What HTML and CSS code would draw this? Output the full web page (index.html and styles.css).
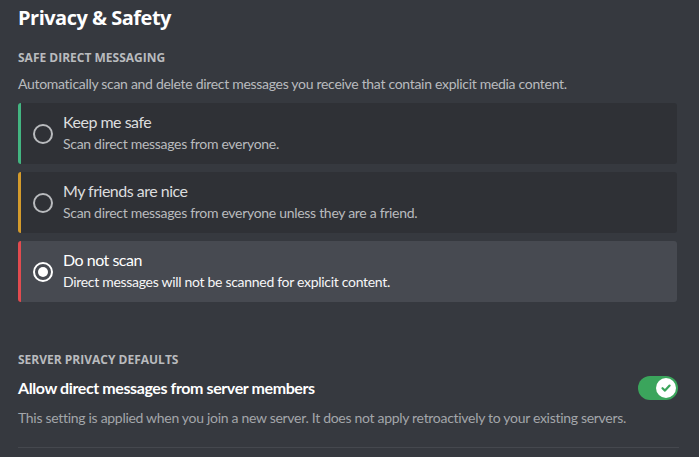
FILE: index.html
```html
<!DOCTYPE html>
<html>
<head>
<meta charset="utf-8">
<link rel="stylesheet" href="styles.css">
</head>
<body>
<main class="page">
  <h1 class="title">Privacy &amp; Safety</h1>
  <h2 class="section-head">Safe Direct Messaging</h2>
  <p class="section-desc">Automatically scan and delete direct messages you receive that contain explicit media content.</p>
  <div class="options">
    <div class="option option-green">
      <span class="radio"></span>
      <div class="option-text">
        <div class="option-title">Keep me safe</div>
        <div class="option-sub">Scan direct messages from everyone.</div>
      </div>
    </div>
    <div class="option option-yellow">
      <span class="radio"></span>
      <div class="option-text">
        <div class="option-title">My friends are nice</div>
        <div class="option-sub">Scan direct messages from everyone unless they are a friend.</div>
      </div>
    </div>
    <div class="option option-red selected">
      <span class="radio checked"></span>
      <div class="option-text">
        <div class="option-title">Do not scan</div>
        <div class="option-sub">Direct messages will not be scanned for explicit content.</div>
      </div>
    </div>
  </div>

  <h2 class="section-head second">Server Privacy Defaults</h2>
  <div class="setting-row">
    <span class="setting-label">Allow direct messages from server members</span>
    <span class="toggle">
      <span class="knob">
        <svg width="14" height="14" viewBox="0 0 14 14"><path d="M3.5 7.2 L6 9.6 L10.6 4.6" fill="none" stroke="#3ba55c" stroke-width="2.2" stroke-linecap="round" stroke-linejoin="round"/></svg>
      </span>
    </span>
  </div>
  <p class="setting-desc">This setting is applied when you join a new server. It does not apply retroactively to your existing servers.</p>
  <div class="divider"></div>
</main>
</body>
</html>
```

FILE: styles.css
```css
html, body {
  margin: 0;
  padding: 0;
  background: #36393f;
  height: 100%;
}
body {
  font-family: Lato, "Open Sans", sans-serif;
  overflow: hidden;
}
.page {
  padding: 6px 22px 0 18px;
}
.title {
  margin: 0;
  font-family: "Open Sans", sans-serif;
  font-size: 20px;
  line-height: 24px;
  font-weight: 700;
  letter-spacing: -0.5px;
  color: #ffffff;
}
.section-head {
  margin: 20px 0 0;
  font-family: "Open Sans", sans-serif;
  font-size: 12px;
  line-height: 16px;
  font-weight: 700;
  text-transform: uppercase;
  color: #b9bbbe;
  letter-spacing: 0;
}
.section-head.second {
  margin-top: 50px;
}
.section-desc {
  margin: 8px 0 0;
  font-size: 14px;
  line-height: 20px;
  letter-spacing: -0.3px;
  color: #b9bbbe;
}
.options {
  margin-top: 9px;
  display: flex;
  flex-direction: column;
  gap: 8px;
}
.option {
  display: flex;
  align-items: center;
  height: 61px;
  box-sizing: border-box;
  background: #2f3136;
  border-left: 3px solid;
  border-radius: 3px;
  padding: 0 10px 0 12px;
}
.option-green { border-left-color: #43b581; }
.option-yellow { border-left-color: #d49b2c; }
.option-red { border-left-color: #e24b4f; }
.option.selected { background: #474a51; }
.radio {
  width: 20px;
  height: 20px;
  box-sizing: border-box;
  border: 2px solid #b9bbbe;
  border-radius: 50%;
  flex: none;
  margin-right: 10px;
  display: flex;
  align-items: center;
  justify-content: center;
}
.radio.checked {
  border-color: #ffffff;
}
.radio.checked::after {
  content: "";
  width: 10px;
  height: 10px;
  border-radius: 50%;
  background: #ffffff;
}
.option-text {
  display: flex;
  flex-direction: column;
  gap: 3px;
  margin-top: -2px;
}
.option-title {
  font-size: 16px;
  line-height: 20px;
  letter-spacing: -0.5px;
  color: #dcddde;
}
.option-sub {
  font-size: 14px;
  line-height: 18px;
  letter-spacing: -0.3px;
  color: #b9bbbe;
}
.selected .option-title { color: #ffffff; }
.selected .option-sub { color: #f6f6f7; }
.setting-row {
  margin-top: 8px;
  display: flex;
  align-items: center;
  justify-content: space-between;
  height: 24px;
}
.setting-label {
  font-size: 16px;
  line-height: 24px;
  font-weight: 700;
  letter-spacing: -0.4px;
  color: #ffffff;
}
.toggle {
  width: 40px;
  height: 24px;
  border-radius: 12px;
  background: #3ba55c;
  display: flex;
  align-items: center;
  justify-content: flex-end;
  padding: 0 2px;
  box-sizing: border-box;
  margin-right: -1px;
}
.knob {
  width: 20px;
  height: 20px;
  border-radius: 50%;
  background: #ffffff;
  display: flex;
  align-items: center;
  justify-content: center;
}
.setting-desc {
  margin: 8px 0 0;
  font-size: 14px;
  line-height: 20px;
  letter-spacing: -0.3px;
  color: #a3a6aa;
}
.divider {
  margin-top: 19px;
  height: 1px;
  background: #45484e;
  margin-right: -2px;
}
```
